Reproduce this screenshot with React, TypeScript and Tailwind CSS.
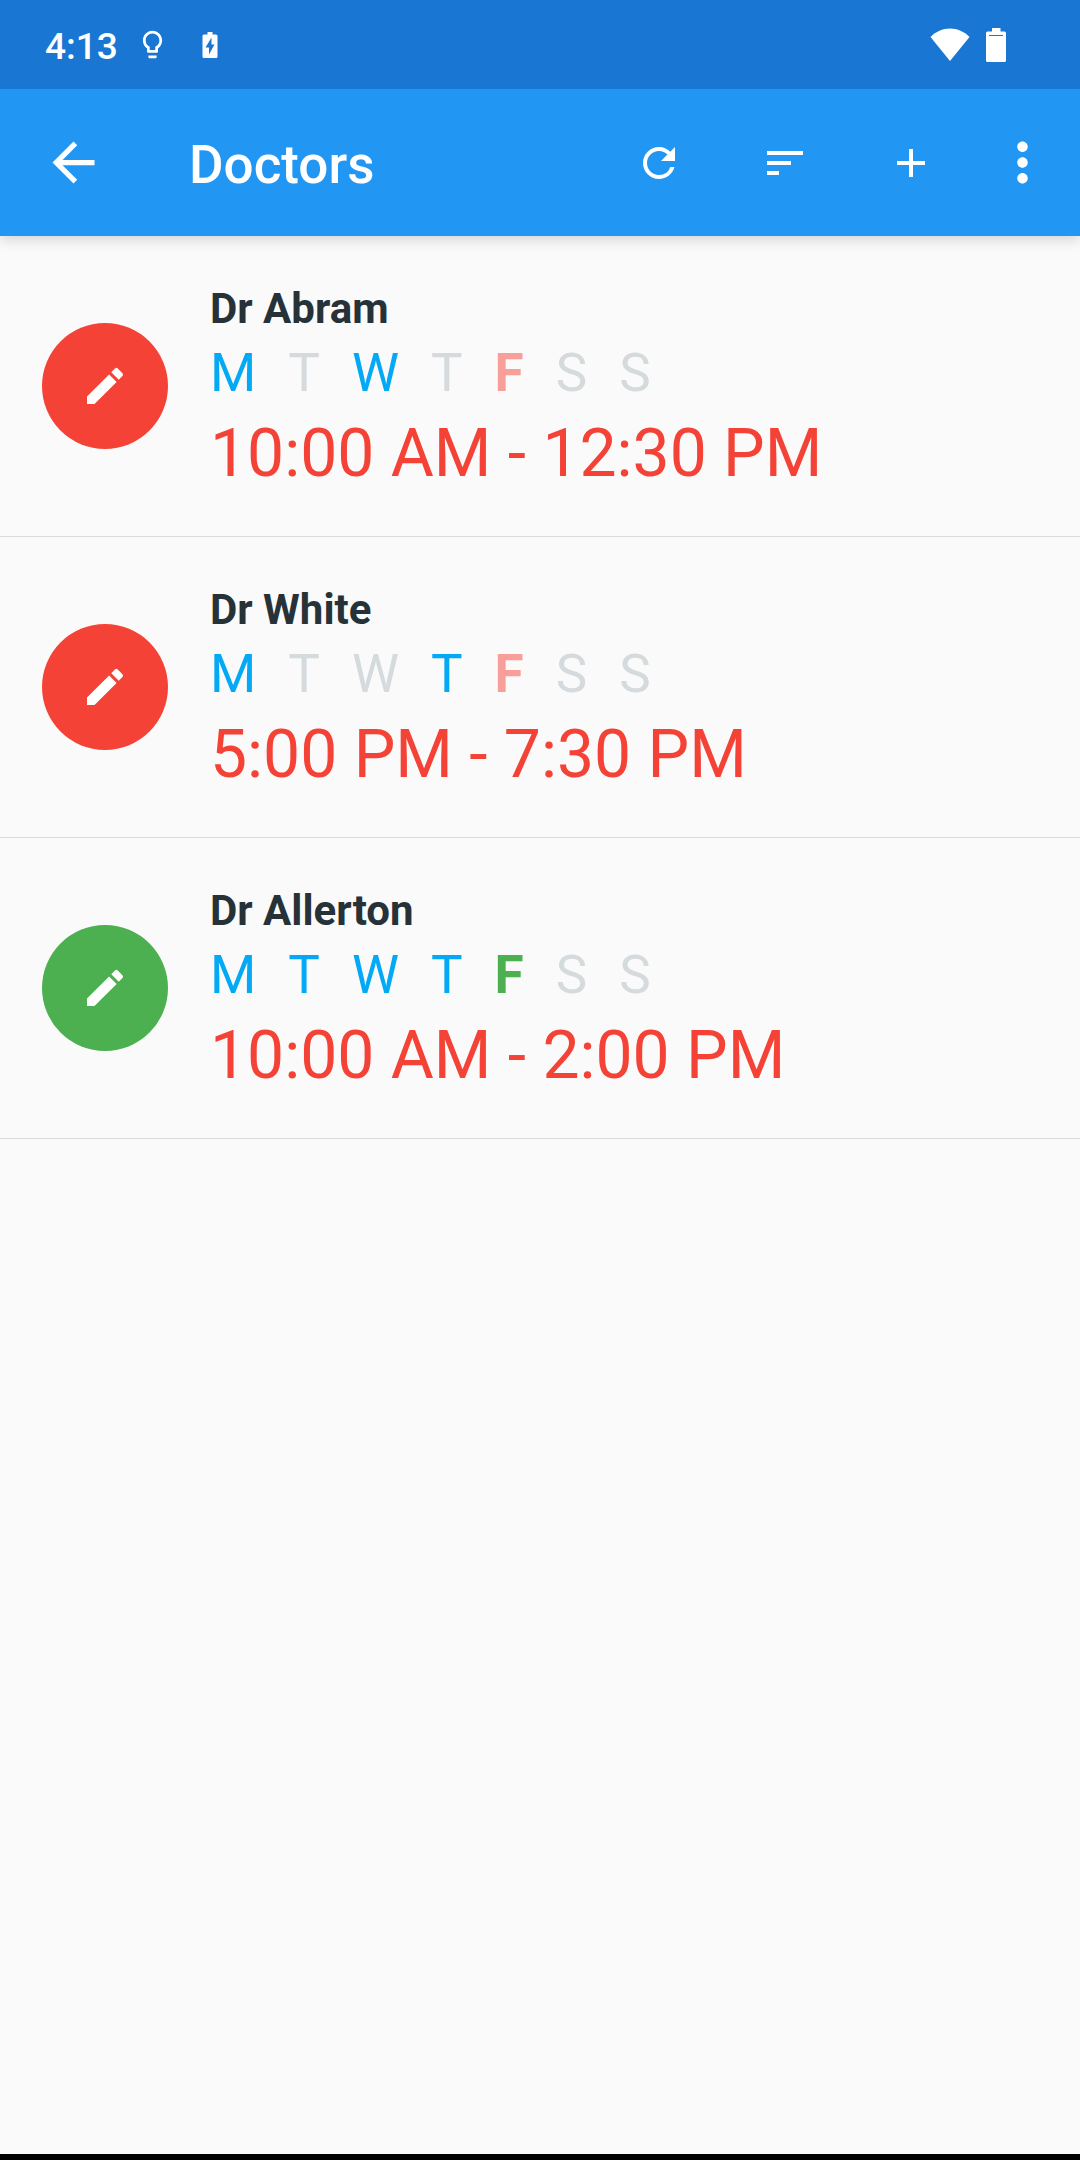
import type { ReactNode } from "react";
import clsx from "clsx";

type DayState = "on" | "off" | "today-on" | "today-off";

type Doctor = {
  name: string;
  hours: string;
  available: boolean;
  days: DayState[];
};

const DAY_LABELS = ["M", "T", "W", "T", "F", "S", "S"];

const DOCTORS: Doctor[] = [
  {
    name: "Dr Abram",
    hours: "10:00 AM - 12:30 PM",
    available: false,
    days: ["on", "off", "on", "off", "today-off", "off", "off"],
  },
  {
    name: "Dr White",
    hours: "5:00 PM - 7:30 PM",
    available: false,
    days: ["on", "off", "off", "on", "today-off", "off", "off"],
  },
  {
    name: "Dr Allerton",
    hours: "10:00 AM - 2:00 PM",
    available: true,
    days: ["on", "on", "on", "on", "today-on", "off", "off"],
  },
];

const DAY_STYLES: Record<DayState, string> = {
  on: "text-[#03a9f4]",
  off: "text-[#d5dadd]",
  "today-on": "font-bold text-[#4caf50]",
  "today-off": "font-bold text-[#f89f99]",
};

function Icon({ d, className }: { d: string; className: string }) {
  return (
    <svg viewBox="0 0 24 24" fill="currentColor" aria-hidden="true" className={className}>
      <path d={d} />
    </svg>
  );
}

function ActionButton({ label, children }: { label: string; children: ReactNode }) {
  return (
    <button type="button" aria-label={label} className="flex h-full w-[126px] items-center justify-center">
      {children}
    </button>
  );
}

function StatusBar() {
  return (
    <div className="relative z-10 flex h-[89px] items-center bg-[#1976d2] pr-[74px] pl-[45px] text-white">
      <span className="pt-1 text-[37px] leading-[44px] font-medium">4:13</span>
      <Icon
        className="ml-[18px] size-[33px]"
        d="M9 21c0 .55.45 1 1 1h4c.55 0 1-.45 1-1v-1H9v1zm3-19C8.14 2 5 5.14 5 9c0 2.38 1.19 4.47 3 5.74V17c0 .55.45 1 1 1h6c.55 0 1-.45 1-1v-2.26c1.81-1.27 3-3.36 3-5.74 0-3.86-3.14-7-7-7zm2.85 11.1l-.85.6V16h-4v-2.3l-.85-.6A4.997 4.997 0 0 1 7 9c0-2.76 2.24-5 5-5s5 2.24 5 5c0 1.63-.8 3.16-2.15 4.1z"
      />
      <svg viewBox="0 0 16 26" fill="currentColor" aria-hidden="true" className="ml-[33px] h-[26px] w-4">
        <path
          fillRule="evenodd"
          d="M5.5 0h5v2.500H14A1.500 1.500 0 0 1 15.500 4v20.500A1.500 1.500 0 0 1 14 26H2A1.500 1.500 0 0 1 .5 24.500V4A1.500 1.500 0 0 1 2 2.500h3.500zM9.500 5.500L3.500 15.500H7v7l5.500-10H9.500z"
        />
      </svg>
      <svg viewBox="0 0 40 34" fill="currentColor" aria-hidden="true" className="ml-auto h-[34px] w-10">
        <path d="M20 33L.5 9C6 3.500 12.500.5 20 .5S34 3.500 39.500 9z" />
      </svg>
      <svg viewBox="0 0 20 34" fill="currentColor" aria-hidden="true" className="ml-4 h-[34px] w-5">
        <path
          fillRule="evenodd"
          d="M6 0h8.500v3.500H18.500A1.500 1.500 0 0 1 20 5v27.500A1.500 1.500 0 0 1 18.500 34h-17A1.500 1.500 0 0 1 0 32.500V5A1.500 1.500 0 0 1 1.500 3.500H6zM3 7v1h14V7z"
        />
      </svg>
    </div>
  );
}

function Toolbar() {
  return (
    <header className="relative flex h-[147px] items-center bg-[#2196f3] pr-2.5 text-white shadow-[0_4px_12px_rgba(0,0,0,0.15)]">
      <button type="button" aria-label="Back" className="flex h-full w-[147px] items-center justify-center">
        <Icon className="size-[63px]" d="M20 11H7.830l5.590-5.590L12 4l-8 8 8 8 1.410-1.410L7.830 13H20v-2z" />
      </button>
      <h1 className="flex-1 pt-1 pl-[42px] text-[53px] leading-[64px] font-medium">Doctors</h1>
      <ActionButton label="Refresh">
        <Icon
          className="size-12"
          d="M17.650 6.350A7.958 7.958 0 0 0 12 4c-4.420 0-7.990 3.580-7.990 8s3.570 8 7.990 8c3.730 0 6.840-2.550 7.730-6h-2.080A5.990 5.990 0 0 1 12 18c-3.310 0-6-2.690-6-6s2.690-6 6-6c1.660 0 3.140.690 4.220 1.780L13 11h7V4l-2.350 2.350z"
        />
      </ActionButton>
      <ActionButton label="Sort">
        <Icon className="size-12" d="M3 18h6v-2H3v2zM3 6v2h18V6H3zm0 7h12v-2H3v2z" />
      </ActionButton>
      <ActionButton label="Add">
        <Icon className="size-12" d="M19 13h-6v6h-2v-6H5v-2h6V5h2v6h6v2z" />
      </ActionButton>
      <button type="button" aria-label="More options" className="flex h-full w-24 items-center justify-center">
        <Icon
          className="size-[63px]"
          d="M12 8c1.100 0 2-.9 2-2s-.9-2-2-2-2 .9-2 2 .9 2 2 2zm0 2c-1.100 0-2 .9-2 2s.9 2 2 2 2-.9 2-2-.9-2-2-2zm0 6c-1.100 0-2 .9-2 2s.9 2 2 2 2-.9 2-2-.9-2-2-2z"
        />
      </button>
    </header>
  );
}

function DoctorRow({ doctor }: { doctor: Doctor }) {
  return (
    <li className="flex min-h-[301px] items-center gap-[42px] border-b border-[#dadada] px-[42px]">
      <button
        type="button"
        aria-label={`Edit ${doctor.name}`}
        className={clsx(
          "flex size-[126px] shrink-0 items-center justify-center rounded-full text-white",
          doctor.available ? "bg-[#4caf50]" : "bg-[#f44336]",
        )}
      >
        <Icon
          className="size-12"
          d="M3 17.250V21h3.750L17.810 9.940l-3.750-3.750L3 17.250zM20.710 7.040a.996.996 0 0 0 0-1.410l-2.340-2.340a.996.996 0 0 0-1.410 0l-1.830 1.830 3.750 3.750 1.830-1.830z"
        />
      </button>
      <div className="pt-2">
        <h2 className="text-[42px] leading-[62px] font-bold text-[#263238]">{doctor.name}</h2>
        <div className="flex gap-8 text-[53px] leading-[66px]">
          {DAY_LABELS.map((label, i) => (
            <span key={i} className={DAY_STYLES[doctor.days[i]]}>
              {label}
            </span>
          ))}
        </div>
        <p className="text-[66px] leading-[96px] text-[#f44336]">{doctor.hours}</p>
      </div>
    </li>
  );
}

export default function App() {
  return (
    <div className="flex min-h-screen flex-col bg-[#fafafa] font-[Roboto,sans-serif]">
      <StatusBar />
      <Toolbar />
      <main className="flex-1">
        <ul>
          {DOCTORS.map((doctor) => (
            <DoctorRow key={doctor.name} doctor={doctor} />
          ))}
        </ul>
      </main>
      <div className="h-1.5 bg-black" />
    </div>
  );
}
